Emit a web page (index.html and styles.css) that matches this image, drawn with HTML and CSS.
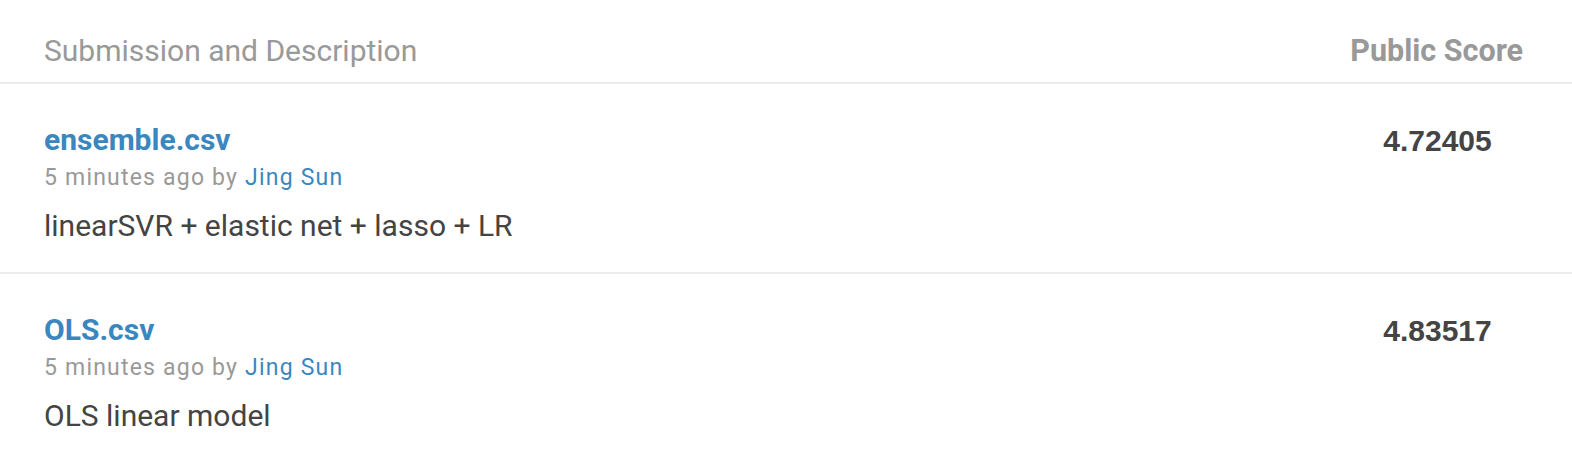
FILE: index.html
```html
<!DOCTYPE html>
<html>
<head>
<meta charset="utf-8">
<link rel="stylesheet" href="styles.css">
</head>
<body>
<div class="table">
  <div class="head">
    <div class="head-main">Submission and Description</div>
    <div class="head-score">Public Score</div>
  </div>
  <div class="row">
    <div class="col-main">
      <a class="file">ensemble.csv</a>
      <div class="meta">5 minutes ago by <a class="user">Jing Sun</a></div>
      <div class="desc">linearSVR + elastic net + lasso + LR</div>
    </div>
    <div class="col-score"><span class="score">4.72405</span></div>
  </div>
  <div class="row">
    <div class="col-main">
      <a class="file">OLS.csv</a>
      <div class="meta">5 minutes ago by <a class="user">Jing Sun</a></div>
      <div class="desc">OLS linear model</div>
    </div>
    <div class="col-score"><span class="score">4.83517</span></div>
  </div>
</div>
</body>
</html>
```
FILE: styles.css
```css
html, body {
  margin: 0;
  padding: 0;
  background: #fff;
}
body {
  font-family: "Roboto", "Liberation Sans", sans-serif;
  color: #444;
}
.table {
  display: flex;
  flex-direction: column;
}
.head {
  box-sizing: border-box;
  display: flex;
  justify-content: space-between;
  height: 84px;
  padding: 33px 49px 0 44px;
  border-bottom: 2px solid #ececec;
  color: #999;
  font-size: 30px;
  line-height: 36px;
}
.head-score {
  font-weight: 700;
  font-size: 30.5px;
  white-space: nowrap;
}
.row {
  box-sizing: border-box;
  display: flex;
  justify-content: space-between;
  padding: 38px 49px 0 44px;
  height: 190px;
  border-bottom: 2px solid #ececec;
}
.row:last-child {
  border-bottom: none;
}
.col-main {
  display: flex;
  flex-direction: column;
}
.file {
  color: #3a87bf;
  font-weight: 700;
  font-size: 30px;
  line-height: 36px;
}
.meta {
  margin-top: 5px;
  color: #999;
  font-size: 23px;
  line-height: 30px;
  letter-spacing: 1.2px;
}
.user {
  color: #3a87bf;
}
.desc {
  margin-top: 15px;
  font-size: 30px;
  line-height: 36px;
  color: #444;
}
.col-score {
  width: 171px;
  text-align: center;
}
.score {
  display: block;
  margin-top: 1px;
  font-family: "Liberation Sans", Arial, sans-serif;
  font-weight: 700;
  font-size: 30px;
  line-height: 36px;
  color: #444;
}
```
